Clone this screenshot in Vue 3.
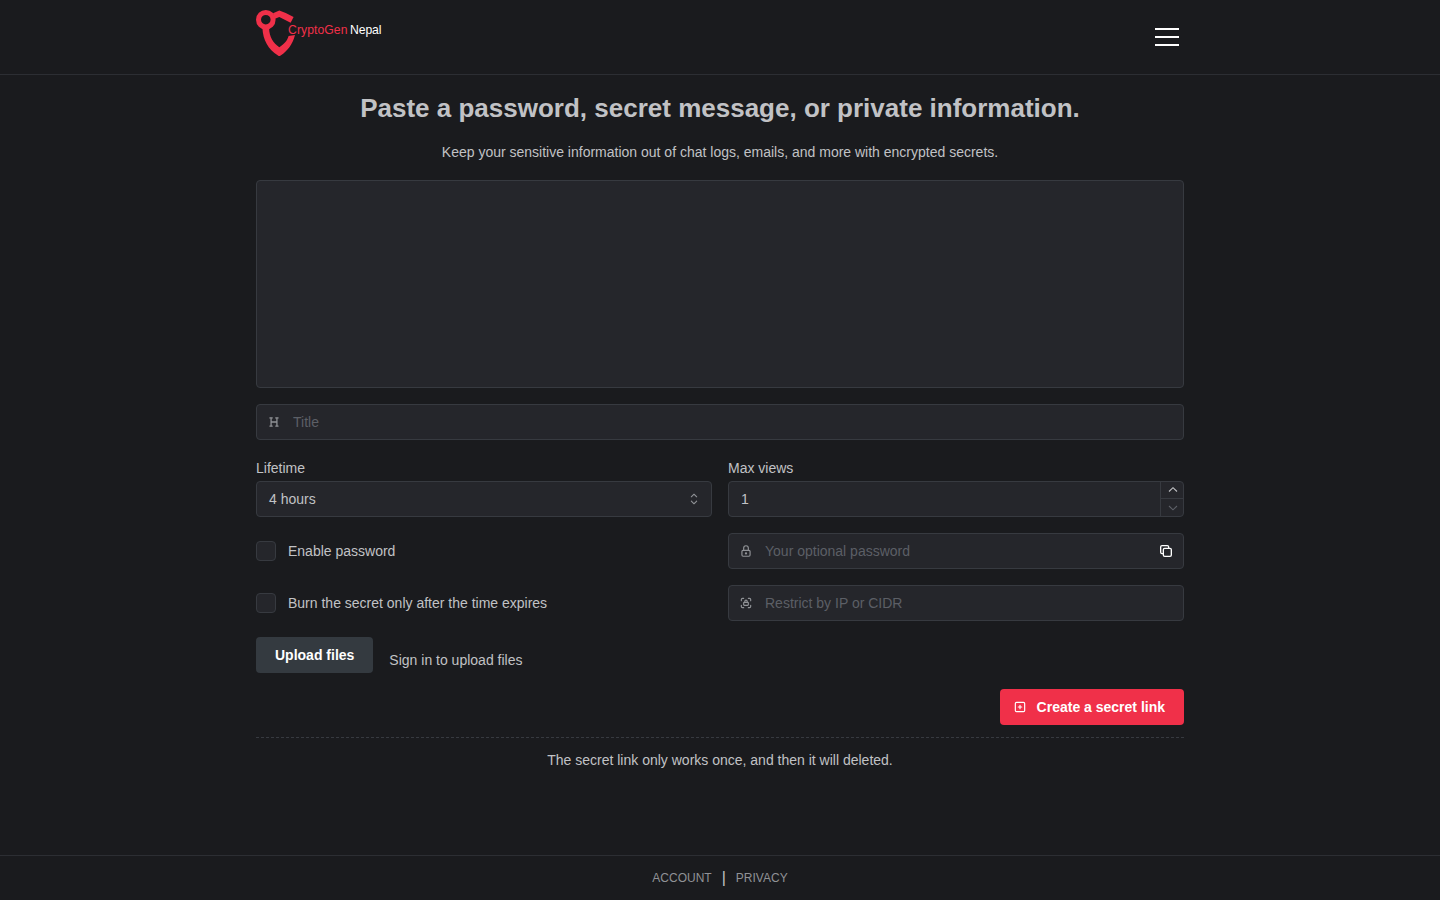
<script setup>
const bars = [1, 2, 3]
</script>

<template>
  <div class="page">
    <header class="header">
      <div class="container head-row">
        <svg class="logo" width="130" height="50" viewBox="0 0 130 50" role="img">
          <circle cx="9.8" cy="10.7" r="7.3" fill="none" stroke="#f03049" stroke-width="5" />
          <g fill="#f03049">
            <path d="M17 4.2 L23.3 1.6 Q30 3.8 37.6 8 L34.6 13.8 L23.3 8 L19 9.8 Z" />
            <path d="M6.4 19 C7 31 12 40 22 46.6 Q23.3 47.6 24.6 46.6 C32 41.5 36.5 35.5 39 26 L32.6 27 C31 32 28.3 35 23.3 38.2 C17.3 34 13.3 28 13.1 19 Z" />
          </g>
          <text x="32" y="25" class="logo-text" fill="#f03049" textLength="59.5">CryptoGen</text>
          <text x="94" y="25" class="logo-text" fill="#fff" textLength="31.5">Nepal</text>
        </svg>
        <button class="burger" aria-label="Menu">
          <span v-for="b in bars" :key="b"></span>
        </button>
      </div>
    </header>

    <main class="container main">
      <h1>Paste a password, secret message, or private information.</h1>
      <p class="lead">Keep your sensitive information out of chat logs, emails, and more with encrypted secrets.</p>
      <textarea class="field secret"></textarea>

      <div class="field input title">
        <svg class="icon" width="14" height="14" viewBox="0 0 24 24" fill="none" stroke="currentColor" stroke-width="2.2" stroke-linecap="round"><path d="M7 12h10M7 5v14M17 5v14M15 19h4M15 5h4M5 19h4M5 5h4" /></svg>
        <input placeholder="Title" />
      </div>

      <div class="grid labels">
        <div>
          <label>Lifetime</label>
          <div class="field input plain">
            <span class="value">4 hours</span>
            <svg class="selector" width="18" height="18" viewBox="0 0 15 15" fill="currentColor"><path fill-rule="evenodd" d="M4.93179 5.43179C4.75605 5.60753 4.75605 5.89245 4.93179 6.06819C5.10753 6.24392 5.39245 6.24392 5.56819 6.06819L7.49999 4.13638L9.43179 6.06819C9.60753 6.24392 9.89245 6.24392 10.0682 6.06819C10.2439 5.89245 10.2439 5.60753 10.0682 5.43179L7.81819 3.18179C7.73379 3.0974 7.61933 3.04999 7.49999 3.04999C7.38064 3.04999 7.26618 3.0974 7.18179 3.18179L4.93179 5.43179ZM10.0682 9.56819C10.2439 9.39245 10.2439 9.10753 10.0682 8.93179C9.89245 8.75606 9.60753 8.75606 9.43179 8.93179L7.49999 10.8636L5.56819 8.93179C5.39245 8.75606 5.10753 8.75606 4.93179 8.93179C4.75605 9.10753 4.75605 9.39245 4.93179 9.56819L7.18179 11.8182C7.35753 11.9939 7.64245 11.9939 7.81819 11.8182L10.0682 9.56819Z" /></svg>
          </div>
        </div>
        <div>
          <label>Max views</label>
          <div class="field input plain number">
            <span class="value">1</span>
            <div class="steps">
              <button aria-label="Increase"><svg width="10" height="10" viewBox="0 0 10 10" fill="none" stroke="currentColor" stroke-width="1.1"><path d="M1 6.5 L5 2.7 L9 6.5" /></svg></button>
              <button class="off" aria-label="Decrease"><svg width="10" height="10" viewBox="0 0 10 10" fill="none" stroke="currentColor" stroke-width="1.1"><path d="M1 3 L5 6.8 L9 3" /></svg></button>
            </div>
          </div>
        </div>
      </div>

      <div class="grid">
        <div class="check"><span class="box"></span><span class="check-text">Enable password</span></div>
        <div class="field input">
          <svg class="icon" width="14" height="14" viewBox="0 0 24 24" fill="none" stroke="currentColor" stroke-width="2" stroke-linejoin="round"><rect x="5" y="11" width="14" height="10" rx="2" /><circle cx="12" cy="16" r="1" /><path d="M8 11V7a4 4 0 0 1 8 0v4" /></svg>
          <input placeholder="Your optional password" />
          <svg class="copy" width="16" height="16" viewBox="0 0 24 24" fill="none" stroke="currentColor" stroke-width="2" stroke-linejoin="round"><rect x="8" y="8" width="12" height="12" rx="2" /><path d="M16 8V6a2 2 0 0 0-2-2H6a2 2 0 0 0-2 2v8a2 2 0 0 0 2 2h2" /></svg>
        </div>
      </div>

      <div class="grid">
        <div class="check"><span class="box"></span><span class="check-text">Burn the secret only after the time expires</span></div>
        <div class="field input">
          <svg class="icon" width="14" height="14" viewBox="0 0 24 24" fill="none" stroke="currentColor" stroke-width="2" stroke-linecap="round" stroke-linejoin="round"><path d="M4 8V6a2 2 0 0 1 2-2h2M4 16v2a2 2 0 0 0 2 2h2M16 4h2a2 2 0 0 1 2 2v2M16 20h2a2 2 0 0 0 2-2v-2" /><rect x="8" y="11" width="8" height="5" rx="1" /><path d="M10 11V9a2 2 0 1 1 4 0v2" /></svg>
          <input placeholder="Restrict by IP or CIDR" />
        </div>
      </div>

      <div class="upload">
        <button class="btn dark">Upload files</button>
        <span>Sign in to upload files</span>
      </div>

      <div class="submit">
        <button class="btn red">
          <svg width="14" height="14" viewBox="0 0 24 24" fill="none" stroke="currentColor" stroke-width="2" stroke-linecap="round"><rect x="4" y="4" width="16" height="16" rx="2" /><path d="M9 12h6M12 9v6" /></svg>
          Create a secret link
        </button>
      </div>
      <p class="note">The secret link only works once, and then it will deleted.</p>
    </main>

    <footer class="footer">
      <a>ACCOUNT</a><span class="bar">|</span><a>PRIVACY</a>
    </footer>
  </div>
</template>

<style>
body { margin: 0; background: #1a1b1e; }
</style>

<style scoped>
* { box-sizing: border-box; }
.page {
  height: 900px;
  display: flex;
  flex-direction: column;
  background: #1a1b1e;
  color: #c1c2c5;
  font: 14px/21.7px "Liberation Sans", Arial, sans-serif;
}
.container { width: 928px; margin: 0 auto; }
.header { height: 75px; border-bottom: 1px solid #2c2e33; }
.head-row { display: flex; justify-content: space-between; padding-top: 9px; }
.logo { display: block; }
.logo-text { font: 12.2px "Liberation Sans", Arial, sans-serif; }
.burger {
  display: flex;
  flex-direction: column;
  gap: 6px;
  width: 24px;
  height: 18px;
  margin: 19px 5px 0 0;
  padding: 0;
  border: 0;
  background: none;
}
.burger span { height: 2px; background: #fff; }
.main { flex: 1; }
h1 { margin: 16px 0 0; font-size: 26px; line-height: 35px; font-weight: 700; text-align: center; }
.lead { height: 22px; margin: 16px 0; text-align: center; }
.field { background: #25262b; border: 1px solid #373a40; border-radius: 4px; }
.secret { display: block; width: 100%; height: 208px; resize: none; outline: none; }
.input { display: flex; align-items: center; height: 36px; padding: 0 10px 0 11px; overflow: hidden; }
.title { margin-top: 16px; }
.icon { flex: none; margin-right: 12px; margin-left: -1px; color: #909296; }
input {
  flex: 1;
  min-width: 0;
  height: 34px;
  padding: 0;
  border: 0;
  outline: none;
  background: none;
  color: inherit;
  font: inherit;
  line-height: 34px;
}
input::placeholder { color: #5c5f66; opacity: 1; }
.grid { display: grid; grid-template-columns: 1fr 1fr; gap: 16px; margin-top: 16px; }
.labels { margin-top: 17px; }
label { display: block; height: 24px; line-height: 22px; }
.plain { padding: 0 8px 0 12px; }
.value { flex: 1; line-height: 34px; }
.selector { color: #909296; }
.number { padding-right: 0; }
.steps { width: 23px; height: 34px; border-left: 1px solid #373a40; }
.steps button {
  display: flex;
  align-items: center;
  justify-content: center;
  width: 100%;
  height: 16px;
  padding: 0 0 0 2px;
  border: 0;
  background: none;
  color: #c1c2c5;
}
.steps button.off { height: 18px; border-top: 1px solid #373a40; color: #5c5f66; }
.check { display: flex; align-items: center; height: 36px; }
.check-text { line-height: 36px; }
.box { width: 20px; height: 20px; margin-right: 12px; background: #25262b; border: 1px solid #373a40; border-radius: 4px; }
.copy { color: #fff; margin-right: -1px; }
.upload { display: flex; gap: 16px; margin-top: 16px; }
.upload span { padding-top: 12px; line-height: 22px; }
.btn {
  display: flex;
  align-items: center;
  height: 36px;
  border: 0;
  border-radius: 4px;
  color: #fff;
  font: 700 14px "Liberation Sans", Arial, sans-serif;
}
.dark { padding: 0 19px; background: #343a40; }
.submit { display: flex; justify-content: flex-end; padding: 16px 0 12px; border-bottom: 1px dashed #373a40; }
.red { gap: 10px; padding: 0 19px 0 13px; background: #f03049; }
.note { margin: 12px 0 0; text-align: center; }
.footer {
  display: flex;
  align-items: center;
  justify-content: center;
  gap: 10px;
  height: 45px;
  border-top: 1px solid #2c2e33;
  font-size: 12px;
  line-height: 22px;
  color: #909296;
}
.bar { font-size: 16px; color: #c1c2c5; }
</style>
